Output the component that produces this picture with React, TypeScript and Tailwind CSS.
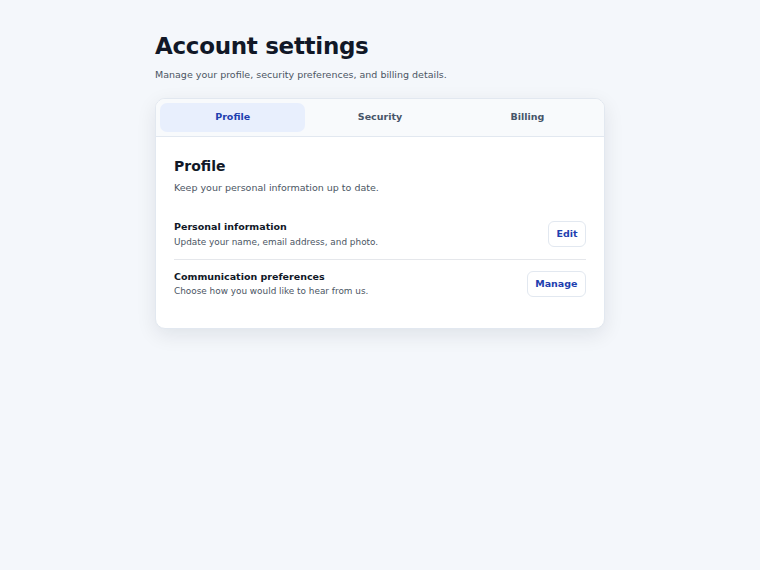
import { useState } from 'react';

const tabs = ['Profile', 'Security', 'Billing'];

const rows = [
  { title: 'Personal information', desc: 'Update your name, email address, and photo.', action: 'Edit' },
  { title: 'Communication preferences', desc: 'Choose how you would like to hear from us.', action: 'Manage' },
];

export default function App() {
  const [active, setActive] = useState('Profile');

  return (
    <div className="min-h-screen bg-[#f4f7fb] font-['DejaVu_Sans',sans-serif]">
      <div className="mx-auto w-[450px] pt-[32px]">
        <h1 className="text-[23px] font-bold leading-[28px] tracking-[-0.3px] text-[#111827]">Account settings</h1>
        <p className="mt-[8px] text-[9.5px] leading-[14px] text-[#4b5563]">
          Manage your profile, security preferences, and billing details.
        </p>

        <div className="mt-[16px] overflow-hidden rounded-[10px] border border-[#e2e8f0] bg-white shadow-[0_6px_20px_rgba(15,23,42,0.09)]">
          <div className="grid grid-cols-3 gap-[2px] border-b border-[#e2e8f0] bg-[#f8fafc] p-[4px]">
            {tabs.map((t) => (
              <button
                key={t}
                onClick={() => setActive(t)}
                className={`h-[29px] rounded-[7px] text-[9.5px] font-bold ${
                  active === t ? 'bg-[#e8effd] text-[#1e40af]' : 'text-[#475569]'
                }`}
              >
                {t}
              </button>
            ))}
          </div>

          <div className="px-[18px] pb-[20px] pt-[19px]">
            <h2 className="text-[14px] font-bold leading-[20px] text-[#111827]">Profile</h2>
            <p className="mt-[5px] text-[9.5px] leading-[14px] text-[#4b5563]">Keep your personal information up to date.</p>

            <div className="mt-[15px]">
              {rows.map((r, i) => (
                <div
                  key={r.title}
                  className={`flex items-center justify-between py-[10px] ${i > 0 ? 'border-t border-[#e5e7eb]' : ''}`}
                >
                  <div>
                    <div className="text-[9.5px] font-bold leading-[13px] text-[#111827]">{r.title}</div>
                    <div className="mt-[2.5px] text-[8.9px] leading-[13px] text-[#4b5563]">{r.desc}</div>
                  </div>
                  <button className="h-[26px] rounded-[6px] border border-[#e2e8f0] bg-white px-[7.5px] text-[9.5px] font-bold text-[#1e40af]">
                    {r.action}
                  </button>
                </div>
              ))}
            </div>
          </div>
        </div>
      </div>
    </div>
  );
}
